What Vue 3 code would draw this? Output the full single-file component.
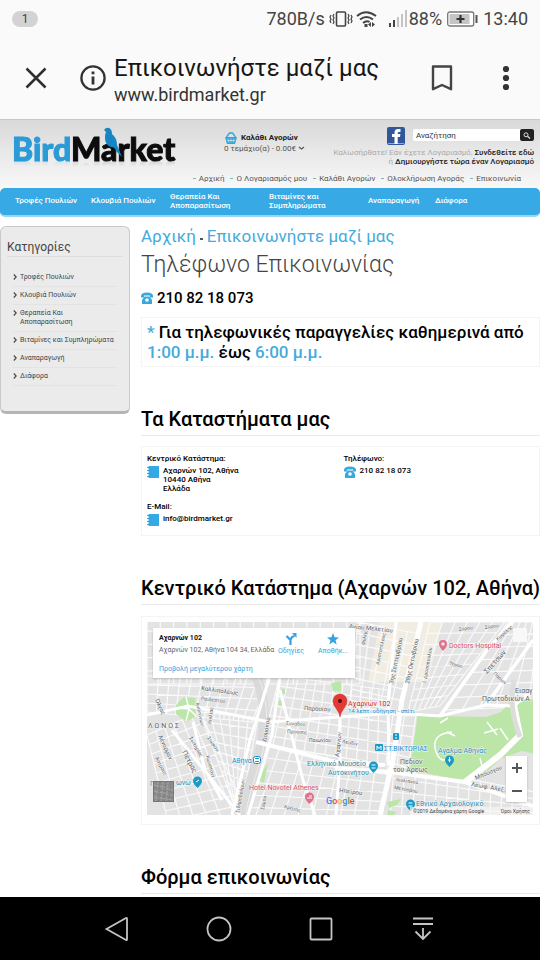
<script setup>
const topLinks = ['Αρχική', 'Ο Λογαριασμός μου', 'Καλάθι Αγορών', 'Ολοκλήρωση Αγοράς', 'Επικοινωνία']

const navItems = [
  { lines: ['Τροφές Πουλιών'], width: 76 },
  { lines: ['Κλουβιά Πουλιών'], width: 79 },
  { lines: ['Θεραπεία Και', 'Αποπαρασίτωση'], width: 99 },
  { lines: ['Βιταμίνες και', 'Συμπληρώματα'], width: 99 },
  { lines: ['Αναπαραγωγή'], width: 67 },
  { lines: ['Διάφορα'], width: 60 },
]

const categories = [
  ['Τροφές Πουλιών'],
  ['Κλουβιά Πουλιών'],
  ['Θεραπεία Και', 'Αποπαρασίτωση'],
  ['Βιταμίνες και Συμπληρώματα'],
  ['Αναπαραγωγή'],
  ['Διάφορα'],
]

/* Each district is a quadrilateral split into a street grid. */
const districts = [
  { q: [[147, 676], [270, 676], [252, 722], [147, 712]], n: 11, m: 4 },
  { q: [[147, 735], [200, 712], [248, 815], [170, 830]], n: 6, m: 10 },
  { q: [[200, 712], [258, 718], [240, 815], [232, 800]], n: 6, m: 9 },
  { q: [[280, 676], [388, 690], [388, 765], [262, 745]], n: 12, m: 7 },
  { q: [[268, 745], [388, 765], [382, 820], [240, 820]], n: 10, m: 6 },
  { q: [[147, 618], [360, 618], [360, 684], [147, 684]], n: 16, m: 5 },
  { q: [[358, 622], [420, 634], [400, 712], [350, 700]], n: 5, m: 7 },
  { q: [[430, 622], [505, 622], [440, 706], [408, 712]], n: 6, m: 8 },
  { q: [[508, 622], [545, 622], [545, 706], [446, 710]], n: 6, m: 7 },
  { q: [[394, 764], [545, 794], [545, 820], [390, 820]], n: 14, m: 4 },
  { q: [[393, 715], [416, 716], [408, 768], [386, 762]], n: 2, m: 5 },
]

const mix = (a, b, t) => [a[0] + (b[0] - a[0]) * t, a[1] + (b[1] - a[1]) * t]
const seg = (a, b) => `M${a[0].toFixed(1)} ${a[1].toFixed(1)}L${b[0].toFixed(1)} ${b[1].toFixed(1)}`

const streets = districts
  .map(({ q: [a, b, c, d], n, m }) => {
    let path = ''
    for (let i = 0; i <= n; i++) path += seg(mix(a, b, i / n), mix(d, c, i / n))
    for (let j = 0; j <= m; j++) path += seg(mix(a, d, j / m), mix(b, c, j / m))
    return path
  })
  .join('')

const streetNames = [
  { t: 'Αγίου Μελετίου', x: 349, y: 628, r: 6, s: 6 },
  { t: 'Φυλής', x: 365, y: 645, r: -80, s: 5 },
  { t: 'Αριστοτέλους', x: 379, y: 665, r: -78, s: 5 },
  { t: '3ης Σεπτεμβρίου', x: 393, y: 684, r: -78, s: 6 },
  { t: '28ης Οκτωβρίου', x: 409, y: 684, r: -78, s: 6 },
  { t: 'Ι. Δροσοπούλου', x: 426, y: 683, r: -80, s: 5 },
  { t: 'Σύρου', x: 459, y: 631, r: -8, s: 5 },
  { t: 'Σύρου', x: 485, y: 629, r: -8, s: 5 },
  { t: 'Κυψέλης', x: 498, y: 641, r: -42, s: 5 },
  { t: 'Τήνου', x: 449, y: 665, r: 12, s: 5 },
  { t: 'Σπετσών', x: 487, y: 674, r: -48, s: 7 },
  { t: 'Πάρων', x: 493, y: 674, r: 42, s: 5 },
  { t: 'Καλλιπόλεως', x: 201, y: 690, r: 8, s: 6 },
  { t: 'Ραιδεστού', x: 201, y: 700, r: 7, s: 5 },
  { t: 'Παρασίου', x: 304, y: 710, r: 3, s: 6 },
  { t: 'Όλγας', x: 155, y: 700, r: 65, s: 6 },
  { t: 'Ιωαννίνων', x: 196, y: 703, r: 78, s: 5 },
  { t: 'Ιουλίας', x: 211, y: 724, r: -82, s: 5 },
  { t: 'Λένορμαν', x: 158, y: 736, r: 65, s: 6 },
  { t: 'Πέτρας', x: 182, y: 752, r: 62, s: 7 },
  { t: 'Σωτηρίας', x: 189, y: 738, r: 60, s: 5 },
  { t: 'Σιώκου', x: 207, y: 738, r: 55, s: 5 },
  { t: 'Άστρους', x: 155, y: 758, r: 62, s: 5 },
  { t: 'Κωνσταντ', x: 206, y: 756, r: 75, s: 5 },
  { t: 'Δομοκού', x: 266, y: 742, r: -80, s: 6 },
  { t: 'Σιδηροδρόμων', x: 239, y: 813, r: -80, s: 5 },
  { t: 'Συνάδου', x: 286, y: 725, r: 3, s: 5 },
  { t: 'Προύσης', x: 287, y: 733, r: 3, s: 5 },
  { t: 'Παιωνίου', x: 309, y: 742, r: 0, s: 5 },
  { t: 'Αχαρνών', x: 339, y: 757, r: -84, s: 6 },
  { t: 'Σάμου', x: 264, y: 810, r: -80, s: 5 },
  { t: 'Κρήτης', x: 284, y: 808, r: 14, s: 5 },
  { t: 'Ηπείρου', x: 339, y: 792, r: 8, s: 6 },
  { t: 'Λευδιν', x: 342, y: 743, r: 10, s: 5 },
  { t: 'Ιουλιανού', x: 396, y: 781, r: 8, s: 5 },
  { t: 'Μετσόβου', x: 394, y: 789, r: 10, s: 5 },
  { t: 'Μπούσγου', x: 476, y: 780, r: -23, s: 6 },
  { t: 'Λεωφ. Αλεξ.', x: 471, y: 786, r: 10, s: 6 },
]
</script>

<template>
  <div class="screen">
    <header class="chrome">
      <div class="status">
        <span class="badge">1</span>
        <div class="status-right">
          <span>780B/s</span>
          <svg class="vibrate" width="24" height="18" viewBox="0 0 24 18" fill="none" stroke="#444">
            <rect x="7.5" y="2" width="9" height="14" rx="1" stroke-width="1.6" />
            <path d="M5 4l-1 2 1 2-1 2 1 2-1 2M2 5L1 7l1 2-1 2 1 2M19 4l1 2-1 2 1 2-1 2 1 2M22 5l1 2-1 2 1 2-1 2" stroke-width="1.2" />
          </svg>
          <svg class="wifi" width="22" height="18" viewBox="0 0 22 18" fill="none" stroke="#444" stroke-width="2">
            <path d="M1 6Q10-1.500 20 6M4 9.500Q10.500 4.500 17 9.500M7 13Q10.500 10 13.500 12" />
            <path d="M8.500 14h3v3h-3zM12 14.500l3-2.500v5zM16 12l3 2.500-3 2.500z" fill="#444" stroke="none" />
          </svg>
          <svg class="signal" width="18" height="17" viewBox="0 0 18 17">
            <path d="M0 13h2v4H0zM4 10h2v7H4z" fill="#444" />
            <path d="M8 7h2v10H8zM12 4h2v13h-2zM16 0h2v17h-2z" fill="#c4c4c4" />
          </svg>
          <span class="percent">88%</span>
          <svg class="battery" width="31" height="16" viewBox="0 0 31 16">
            <rect x=".7" y="1" width="26" height="14" rx="2" fill="#fff" stroke="#777" stroke-width="1.300" />
            <rect x="2.500" y="3" width="20" height="10" fill="#c5c5c5" />
            <path d="M9.500 8h8M13.500 4v8" stroke="#333" stroke-width="2.200" />
            <path d="M29.500 4v8" stroke="#555" stroke-width="2" />
          </svg>
          <span class="clock">13:40</span>
        </div>
      </div>
      <div class="toolbar">
        <button class="icon-btn close" aria-label="Κλείσιμο">
          <svg width="22" height="22" viewBox="0 0 22 22"><path d="M1.500 1.500l19 19M20.500 1.500l-19 19" stroke="#2f2f2f" stroke-width="2.500" /></svg>
        </button>
        <button class="icon-btn info" aria-label="Πληροφορίες">
          <svg width="26" height="26" viewBox="0 0 26 26">
            <circle cx="13" cy="13" r="11.600" fill="none" stroke="#333" stroke-width="2.300" />
            <path d="M11.600 6.500h2.800v2.800h-2.800zM11.600 11.500h2.800v8h-2.800z" fill="#333" />
          </svg>
        </button>
        <div class="page-id">
          <span class="page-title">Επικοινωνήστε μαζί μας</span>
          <span class="page-url">www.birdmarket.gr</span>
        </div>
        <button class="icon-btn mark" aria-label="Σελιδοδείκτης">
          <svg width="22" height="28" viewBox="0 0 22 28"><path d="M2 2.500h18v22.700l-9-4.200-9 4.200z" fill="none" stroke="#444" stroke-width="2.400" stroke-linejoin="round" /></svg>
        </button>
        <button class="icon-btn more" aria-label="Μενού">
          <svg width="8" height="26" viewBox="0 0 8 26" fill="#333"><circle cx="4" cy="4" r="3.100" /><circle cx="4" cy="13" r="3.100" /><circle cx="4" cy="22" r="3.100" /></svg>
        </button>
      </div>
    </header>

    <div class="site-head">
      <div class="head-row">
        <a class="logo" href="#" aria-label="BirdMarket">
          <span class="logo-text"><span class="bird">Bird</span><span class="market">Market</span></span>
          <svg class="logo-bird" width="20" height="32" viewBox="0 0 20 32">
            <path d="M1 3Q3 0 6 1Q9 2 9 7Q14 11 14 18L19 30L13 24Q12 20 8 20Q2 18 2 11Q2 7 3 5z" fill="#1585c4" />
          </svg>
        </a>
        <div class="cart">
          <div class="cart-title">
            <svg width="14" height="12" viewBox="0 0 14 12" fill="#35a5dc">
              <path d="M1 5h12l-2 7H3z" /><path d="M2.500 5L5.500 1h3l3 4" fill="none" stroke="#35a5dc" stroke-width="1.300" /><path d="M4 6.500l1 4M7 6.500v4M10 6.500l-1 4M3 8.500h8" stroke="#d8eef8" stroke-width=".6" />
            </svg>
            <b>Καλάθι Αγορών</b>
          </div>
          <div class="cart-sum">0 τεμάχιο(α) - 0.00€
            <svg width="7" height="5" viewBox="0 0 7 5"><path d="M1 1l2.500 2L6 1" fill="none" stroke="#555" stroke-width="1.200" /></svg>
          </div>
        </div>
        <div class="tools">
          <form class="search" @submit.prevent>
            <a class="fb" href="#" aria-label="Facebook">
              <svg width="18" height="18" viewBox="0 0 18 18">
                <rect width="18" height="18" rx="2" fill="#2f5799" />
                <path d="M1 16h16v1H1z" fill="#8fa9d2" />
                <path d="M7.500 17V10H5V7h2.500V5.500Q7.500 2 11 2h2.500v3H12q-1.300 0-1.300 1.300V7h2.700L13 10h-2.300v7z" fill="#fff" />
              </svg>
            </a>
            <span class="field">
              <input type="text" aria-label="Αναζήτηση" placeholder="Αναζήτηση" />
              <button aria-label="Εύρεση"><svg width="8" height="7" viewBox="0 0 8 7"><circle cx="3" cy="2.800" r="2" fill="none" stroke="#ddd" /><path d="M4.500 4.200L7 6.500" stroke="#ddd" stroke-width="1.300" /></svg></button>
            </span>
          </form>
          <p class="welcome">Καλωσήρθατε! Εάν έχετε Λογαριασμό, <a href="#">Συνδεθείτε εδώ</a><br />ή <a href="#">Δημιουργήστε τώρα έναν Λογαριασμό</a></p>
        </div>
      </div>
      <nav class="top-links">
        <a v-for="l in topLinks" :key="l" href="#">{{ l }}</a>
      </nav>
    </div>

    <nav class="main-nav">
      <a v-for="n in navItems" :key="n.lines[0]" href="#" :style="{ flexBasis: n.width + 'px' }">
        <span v-for="s in n.lines" :key="s">{{ s }}</span>
      </a>
    </nav>

    <div class="body">
      <aside class="side">
        <h3>Κατηγορίες</h3>
        <ul>
          <li v-for="c in categories" :key="c[0]">
            <svg width="4" height="6" viewBox="0 0 4 6"><path d="M.8.5L3.200 3 .8 5.500" fill="none" stroke="#444" stroke-width="1.100" /></svg>
            <a href="#"><span v-for="s in c" :key="s">{{ s }}</span></a>
          </li>
        </ul>
      </aside>

      <main class="content">
        <div class="crumbs"><a href="#">Αρχική</a><i></i><a href="#">Επικοινωνήστε μαζί μας</a></div>
        <h1>Τηλέφωνο Επικοινωνίας</h1>
        <div class="phone">
          <svg width="12" height="12" viewBox="0 0 12 12"><path d="M0 4Q0 .5 6 .5T12 4v1.500H9V3.500H3v2H0z" fill="#38a9df" /><path d="M3.500 4.500h5L11 8v4H1V8z" fill="#38a9df" /><circle cx="6" cy="8" r="1.800" fill="#fff" /></svg>
          210 82 18 073
        </div>
        <p class="box hours"><em>*</em> Για τηλεφωνικές παραγγελίες καθημερινά από <em>1:00 μ.μ.</em> έως <em>6:00 μ.μ.</em></p>

        <h2>Τα Καταστήματα μας</h2>
        <div class="box shop">
          <section>
            <b>Κεντρικό Κατάστημα:</b>
            <div class="entry">
              <svg width="12" height="12" viewBox="0 0 12 12"><path d="M1.500 0H12v12H1.500z" fill="#35a9e4" /><path d="M0 1.500h2M0 4.500h2M0 7.500h2M0 10.500h2" stroke="#35a9e4" stroke-width="1.200" /></svg>
              <address>Αχαρνών 102, Αθήνα<br />10440 Αθήνα<br />Ελλάδα</address>
            </div>
          </section>
          <section>
            <b>Τηλέφωνο:</b>
            <div class="entry">
              <svg width="12" height="12" viewBox="0 0 12 12"><path d="M0 4Q0 .5 6 .5T12 4v1.500H9V3.500H3v2H0z" fill="#38a9df" /><path d="M3.500 4.500h5L11 8v4H1V8z" fill="#38a9df" /><circle cx="6" cy="8" r="1.800" fill="#fff" /></svg>
              <span>210 82 18 073</span>
            </div>
          </section>
          <section>
            <b>E-Mail:</b>
            <div class="entry">
              <svg width="12" height="12" viewBox="0 0 12 12"><path d="M1.500 0H12v12H1.500z" fill="#35a9e4" /><path d="M0 1.500h2M0 4.500h2M0 7.500h2M0 10.500h2" stroke="#35a9e4" stroke-width="1.200" /></svg>
              <span>info@birdmarket.gr</span>
            </div>
          </section>
        </div>

        <h2>Κεντρικό Κατάστημα (Αχαρνών 102, Αθήνα)</h2>
        <div class="box map-frame">
          <div class="map">
            <svg class="map-art" viewBox="147 622 386 193" preserveAspectRatio="xMidYMid slice">
              <rect x="140" y="615" width="400" height="210" fill="#e3e3e3" />
              <path d="M380 622h62l-14 60h-60z" fill="#f2ede2" />
              <path :d="streets" stroke="#fafafa" stroke-width="1.200" fill="none" />
              <path d="M256 676Q272 715 256 765T242 818" stroke="#dadada" stroke-width="10" fill="none" />
              <path d="M258 676Q275 715 259 765T246 818" stroke="#eee" stroke-width="1" fill="none" />
              <g fill="#bce6a7">
                <path d="M176 705l8-8 11 1 1 18-10 6-10-8z" />
                <path d="M276 690l9-1v5h-8zM279 700l4 1-1 5-4-1zM331 683l10-2v10h-8z" />
                <path d="M268 763l-11 17 7 3z" />
                <path d="M418 713l20 3 48 1 15-5 14-16 10 3 15 2v54l-18-4-22 8-18 17-22 4-50-10z" />
                <path d="M387 802l14-3-4 6-8 3zM388 810l8 2-3 5h-6z" />
              </g>
              <path d="M186 697l3 12 7 7M176 708l13 1-3 12" stroke="#fff" stroke-width="1.500" fill="none" />
              <g stroke="#fff" fill="none">
                <path d="M147 715L188 706 270 722 395 713 440 716 486 705 514 706 533 690" stroke-width="3" />
                <path d="M172 730L240 815M193 722L205 770 222 800M232 815L250 740 270 676" stroke-width="3" />
                <path d="M280 676L272 735 248 815M280 690L303 780 315 815" stroke-width="3" />
                <path d="M340 700V760L336 815" stroke-width="3" />
                <path d="M421 622L402 700 393 760 380 815" stroke-width="5" />
                <path d="M396 622L388 705 389 765" stroke-width="3" />
                <path d="M256 742L340 763 385 765M335 768L390 772 465 782 533 806" stroke-width="4" />
                <path d="M440 716L487 650 512 622M486 705L533 640" stroke-width="3.500" />
                <path d="M465 782L500 755 520 735 513 700" stroke-width="6" />
                <path d="M452 732q-22 2-16 20 5 12 12 6M455 736l-8-4M487 722l10 13M484 733l14-4M440 723l8-5M480 758l2 8M500 728l8 12" stroke-width="1.500" />
              </g>
              <path d="M514 680Q508 706 520 737" stroke="#ddd" stroke-width="5" fill="none" />
              <g class="halo" fill="#606060">
                <text v-for="(s, i) in streetNames" :key="i" :x="s.x" :y="s.y" :font-size="s.s" :transform="`rotate(${s.r} ${s.x} ${s.y})`">{{ s.t }}</text>
                <text x="515" y="693" font-size="7">Εισαγ</text>
                <text x="482" y="701" font-size="7">Πρωτοδικών Α</text>
                <text x="400" y="764" font-size="7">Πεδίον</text>
                <text x="393" y="772" font-size="7">του Άρεως</text>
                <text x="148" y="728" font-size="7" letter-spacing="2">ΛΩΝΟΣ</text>
              </g>
              <g class="halo" font-size="7">
                <g fill="#d4506b">
                  <text x="449" y="648">Doctors Hospital</text>
                  <text x="249" y="790">Hotel Novotel Athenes</text>
                  <text x="348" y="706" fill="#d6252c">Αχαρνών 102</text>
                </g>
                <g fill="#198fb0">
                  <text x="307" y="766">Ελληνικό Μουσείο</text>
                  <text x="328" y="775">Αυτοκινήτου</text>
                  <text x="438" y="753">Άγαλμα Αθηνάς</text>
                  <text x="416" y="806">Εθνικό Αρχαιολογικό</text>
                  <text x="150" y="786">Γ</text>
                  <text x="176" y="785">ωνώ</text>
                </g>
                <g fill="#1b8ed0">
                  <text x="384" y="751">ΣΤ.ΒΙΚΤΩΡΙΑΣ</text>
                  <text x="232" y="763">Αθήνα</text>
                  <text x="348" y="713" font-size="6">14 λεπτ. οδήγηση - σπίτι</text>
                </g>
              </g>
              <g fill="#1b9ac6">
                <path d="M369 766a4.500 4.500 0 1 1 9 0q0 3-4.500 7-4.500-4-4.500-7zM445 760a4.500 4.500 0 1 1 9 0q0 3-4.500 7-4.500-4-4.500-7zM406 804a4.500 4.500 0 1 1 9 0q0 3-4.500 7-4.500-4-4.500-7zM193 781a4.500 4.500 0 1 1 9 0q0 3-4.500 7-4.500-4-4.500-7z" />
                <path d="M371.500 765h4M371.500 768h4M408.500 803h4M408.500 806h4M449.500 757v5M448 760h3M196 782l3-2" stroke="#fff" />
                <rect x="375" y="744" width="8" height="7" rx="1" /><rect x="393" y="733" width="6" height="7" rx="1" />
                <path d="M377 750v-4l2 2.500 2-2.500v4M396 734v2M395 738h2" stroke="#fff" fill="none" />
                <rect x="253.500" y="756.500" width="7" height="7" rx="2" fill="#fff" stroke="#1b8ed0" /><path d="M255 758h4v1h-4zM255 761h4v1h-4z" />
              </g>
              <g fill="#df7188">
                <path d="M439 644a4 4 0 1 1 8 0q0 3-4 7-4-4-4-7zM305 797a4.500 4.500 0 1 1 9 0q0 3-4.500 7-4.500-4-4.500-7z" />
                <path d="M443 642v4M441 644h4M307 798h5M309 796h3" stroke="#fff" fill="none" />
              </g>
              <path d="M333 701a7 7 0 1 1 14 0q0 4-3.500 8-2.500 3-3.500 8-1-5-3.500-8-3.500-4-3.500-8z" fill="#e53a34" stroke="#b92d28" stroke-width=".5" />
              <circle cx="340" cy="701" r="2" fill="#4c1113" />
              <text x="326" y="804" font-size="9" font-weight="500"><tspan fill="#4285f4">G</tspan><tspan fill="#ea4335">o</tspan><tspan fill="#fbbc05">o</tspan><tspan fill="#4285f4">g</tspan><tspan fill="#34a853">l</tspan><tspan fill="#ea4335">e</tspan></text>
              <rect x="410" y="807" width="123" height="8" fill="#f5f5f5" opacity=".7" />
              <text x="413" y="813" font-size="5" fill="#444">©2019 Δεδομένα χάρτη Google</text>
              <text x="530" y="813" font-size="5" fill="#444" text-anchor="end">Όροι Χρήσης</text>
            </svg>

            <div class="card">
              <div class="place">
                <b>Αχαρνών 102</b>
                <span>Αχαρνών 102, Αθήνα 104 34, Ελλάδα</span>
                <a href="#">Προβολή μεγαλύτερου χάρτη</a>
              </div>
              <a class="act" href="#">
                <svg width="12" height="12" viewBox="0 0 12 12"><path d="M5.500 12V7L1.500 3M5.500 8q0-4 4-5" fill="none" stroke="#35a3e0" stroke-width="2.200" /><path d="M7 0h4.500v5z" fill="#35a3e0" /></svg>
                Οδηγίες
              </a>
              <a class="act save" href="#">
                <svg width="12" height="12" viewBox="0 0 12 12"><path d="M6 0l1.600 4.200 4.400.2-3.500 2.800L9.700 11.600 6 9.100 2.300 11.600l1.200-4.400L0 4.400l4.400-.2z" fill="#35a3e0" /></svg>
                Αποθήκ...
              </a>
            </div>
            <button class="full" aria-label="Πλήρης οθόνη"></button>
            <button class="sat" aria-label="Δορυφόρος">
              <svg width="19" height="19" viewBox="0 0 19 19"><rect width="19" height="19" fill="#8c8c8c" /><path d="M0 3l19 5M0 9l19 4M0 15l19 3M4 0L2 19M9 0L7 19M14 0l-2 19" stroke="#a8a8a8" stroke-dasharray="2 1" /><path d="M0 6l19 5M0 12l19 4M6 0L4 19M12 0l-2 19M17 0l-2 19" stroke="#747474" stroke-dasharray="1 2" /></svg>
            </button>
            <div class="zoom">
              <button aria-label="Μεγέθυνση"><svg width="10" height="10" viewBox="0 0 10 10"><path d="M0 5h10M5 0v10" stroke="#555" stroke-width="2" /></svg></button>
              <button aria-label="Σμίκρυνση"><svg width="10" height="10" viewBox="0 0 10 10"><path d="M0 5h10" stroke="#555" stroke-width="2" /></svg></button>
            </div>
          </div>
        </div>

        <h2>Φόρμα επικοινωνίας</h2>
      </main>
    </div>

    <footer class="sys">
      <button aria-label="Πίσω"><svg width="26" height="28" viewBox="0 0 26 28"><path d="M2.500 14L22 3Q23 2.500 23 4v20q0 1.500-1 1z" /></svg></button>
      <button aria-label="Αρχική οθόνη"><svg width="26" height="28" viewBox="0 0 26 28"><circle cx="13" cy="14" r="11.500" /></svg></button>
      <button aria-label="Πρόσφατα"><svg width="26" height="28" viewBox="0 0 26 28"><rect x="2.500" y="3.500" width="21" height="21" rx="1" /></svg></button>
      <button aria-label="Ειδοποιήσεις"><svg width="26" height="28" viewBox="0 0 26 28"><path d="M3 3.500h20M3 9h20M13 13v11M5.500 16.500L13 24l7.500-7.500" /></svg></button>
    </footer>
  </div>
</template>

<style>
body {
  margin: 0;
  background: #fff;
}
</style>

<style scoped>
* {
  box-sizing: border-box;
}
.screen {
  min-height: 100vh;
  display: flex;
  flex-direction: column;
  font-family: Roboto, "Noto Sans", sans-serif;
  color: #000;
}
a {
  color: inherit;
  text-decoration: none;
}
button {
  border: 0;
  padding: 0;
  background: none;
  display: flex;
  align-items: center;
  justify-content: center;
}
svg {
  display: block;
  flex: none;
}
h1, h2, h3, p, ul {
  margin: 0;
  padding: 0;
  list-style: none;
}

.chrome {
  background: #fafafa;
  border-bottom: 1px solid #c8c8c8;
}
.status {
  height: 37px;
  padding: 0 12px;
  display: flex;
  align-items: center;
  justify-content: space-between;
  font-size: 18px;
  color: #444;
}
.badge {
  width: 26px;
  height: 16px;
  border-radius: 8px;
  background: #d3d3d3;
  font-size: 12px;
  line-height: 16px;
  text-align: center;
}
.status-right {
  display: flex;
  align-items: center;
}
.vibrate { margin-left: 4px; }
.wifi { margin-left: 3px; }
.signal { margin-left: 11px; }
.percent { margin-left: 2px; }
.battery { margin-left: 5px; }
.clock { margin-left: 5px; }
.toolbar {
  height: 82px;
  padding: 0 30px 0 25px;
  display: flex;
  align-items: center;
}
.info { margin-left: 33px; }
.page-id {
  flex: 1;
  margin-left: 8px;
  padding-top: 3px;
  display: flex;
  flex-direction: column;
}
.page-title {
  font-size: 24px;
  line-height: 30px;
  color: #161616;
}
.page-url {
  font-size: 18px;
  line-height: 24px;
  color: #333;
}
.more { margin-left: 49px; }

.site-head {
  background: linear-gradient(#d9d9d9, #ececec 60%, #f8f8f8);
  font-size: 8px;
  line-height: 9px;
  color: #555;
}
.head-row {
  height: 52px;
  padding: 7px 6px 0 12px;
  display: flex;
}
.logo {
  position: relative;
  width: 212px;
}
.logo-text {
  display: inline-block;
  font-family: Lato, sans-serif;
  font-weight: 900;
  font-size: 32px;
  line-height: 44px;
  color: #0c0c0c;
  -webkit-box-reflect: below -20px linear-gradient(transparent 65%, rgba(0, 0, 0, 0.3));
}
.market {
  -webkit-text-stroke: 1px #0c0c0c;
}
.bird {
  color: #2a9bd6;
  -webkit-text-stroke: 1px #2a9bd6;
}
.logo-bird {
  position: absolute;
  left: 91px;
  top: 0;
}
.cart {
  padding-top: 5px;
  white-space: nowrap;
}
.cart-title {
  display: flex;
  gap: 3px;
  align-items: center;
  line-height: 12px;
  color: #222;
}
.cart-sum {
  display: flex;
  align-items: center;
  gap: 2px;
}
.tools {
  margin-left: auto;
  text-align: right;
}
.search {
  display: flex;
  justify-content: flex-end;
  gap: 8px;
}
.field {
  margin-top: 2px;
  width: 121px;
  height: 12px;
  display: flex;
  background: #fff;
  border-radius: 2px;
}
.field input {
  flex: 1;
  min-width: 0;
  border: 0;
  padding: 0 3px;
  background: none;
  font: 8px Roboto, sans-serif;
}
.field input::placeholder {
  color: #333;
}
.field button {
  width: 14px;
  background: #222;
  border-radius: 2px;
}
.welcome {
  padding-top: 3px;
  color: #aaa;
  white-space: nowrap;
}
.welcome a {
  color: #222;
  font-weight: 500;
}
.top-links {
  height: 16px;
  padding: 2px 19px 0 0;
  display: flex;
  justify-content: flex-end;
  gap: 6px;
}
.top-links a::before {
  content: "";
  display: inline-block;
  width: 3px;
  height: 1px;
  margin: 0 3px 2px 0;
  background: #7bb;
}

.main-nav {
  height: 29px;
  padding: 0 0 2px 15px;
  display: flex;
  align-items: center;
  border-radius: 5px;
  background: #37a9e4;
  border-bottom: 2px solid #9bd3f0;
  color: #fff;
  font-size: 8px;
  line-height: 9px;
  font-weight: 500;
}
.main-nav a {
  flex: 0 1 auto;
}
.main-nav span, .side span {
  display: block;
}

.body {
  flex: 1;
  display: flex;
  align-items: flex-start;
  gap: 11px;
  padding-top: 9px;
}
.side {
  width: 130px;
  flex: none;
  padding: 12px 6px 25px;
  border: 1px solid #c9c9c9;
  border-bottom: 3px solid #b5b5b5;
  border-radius: 6px;
  background: #ebebeb;
  color: #444;
}
.side h3 {
  font-size: 12px;
  line-height: 17px;
  font-weight: 400;
  border-bottom: 1px solid #ddd;
}
.side ul {
  padding: 12px 6px 0;
}
.side li {
  display: flex;
  gap: 3px;
  padding: 4px 0;
  border-bottom: 1px solid #e3e3e3;
  font-size: 7px;
  line-height: 9px;
  white-space: nowrap;
}
.side li svg {
  margin-top: 1px;
}

.content {
  flex: 1;
  min-width: 0;
}
.crumbs {
  display: flex;
  align-items: center;
  font-size: 17px;
  line-height: 20px;
  color: #45abdd;
}
.crumbs i {
  width: 3px;
  height: 2px;
  margin: 6px 4px 0;
  background: #555;
}
h1 {
  margin-top: 4px;
  font-size: 23px;
  line-height: 30px;
  font-weight: 300;
  color: #444;
}
.phone {
  margin-top: 8px;
  display: flex;
  align-items: center;
  gap: 4px;
  font-size: 15px;
  line-height: 20px;
  font-weight: 500;
}
.box {
  border: 1px solid #f4f4f4;
}
.hours {
  margin-top: 9px;
  padding: 4px 5px;
  min-height: 50px;
  font-size: 17px;
  line-height: 20px;
  font-weight: 500;
}
.hours em {
  font-style: normal;
  color: #45abdd;
}
h2 {
  margin-top: 40px;
  padding-bottom: 4px;
  font-size: 20px;
  line-height: 24px;
  font-weight: 500;
  border-bottom: 1px solid #e9e9e9;
}
.shop {
  margin-top: 10px;
  padding: 7px 5px 9px;
  display: grid;
  grid-template-columns: 1fr 1fr;
  gap: 9px 6px;
  font-size: 8px;
  line-height: 9px;
  font-weight: 500;
}
.shop b {
  display: block;
  font-weight: 500;
}
.entry {
  margin-top: 3px;
  display: flex;
  gap: 4px;
}
address {
  font-style: normal;
}
.map-frame {
  margin-top: 11px;
  padding: 5px 6px 9px 5px;
}
.map {
  position: relative;
}
.map-art {
  width: 100%;
  height: auto;
}
.halo {
  paint-order: stroke;
  stroke: #f5f5f5;
  stroke-width: 1px;
}
.card {
  position: absolute;
  left: 6px;
  top: 6px;
  width: 202px;
  height: 50px;
  padding: 4px 6px;
  display: flex;
  background: #fff;
  box-shadow: 0 1px 2px rgba(0, 0, 0, 0.2);
  font-size: 7px;
  line-height: 12px;
  white-space: nowrap;
}
.place {
  width: 114px;
  flex: none;
  color: #666;
}
.place b {
  display: block;
  color: #111;
}
.place a {
  display: block;
  margin-top: 7px;
}
.card a {
  color: #3aa0da;
}
.act {
  width: 36px;
  flex: none;
  padding-top: 1px;
  display: flex;
  flex-direction: column;
  align-items: center;
}
.save {
  margin-left: 6px;
}
.full {
  position: absolute;
  top: 6px;
  right: 6px;
  width: 14px;
  height: 14px;
  background: #f8f8f8;
}
.sat {
  position: absolute;
  left: 6px;
  bottom: 13px;
  border: 1px solid #777;
}
.zoom {
  position: absolute;
  right: 6px;
  bottom: 13px;
  background: #fff;
  box-shadow: 0 1px 2px rgba(0, 0, 0, 0.2);
}
.zoom button {
  width: 21px;
  height: 23px;
}

.sys {
  height: 63px;
  padding: 0 66px;
  display: flex;
  justify-content: space-around;
  align-items: center;
  background: #000;
}
.sys svg {
  fill: none;
  stroke: #c4c4c4;
  stroke-width: 1.8px;
}
</style>
